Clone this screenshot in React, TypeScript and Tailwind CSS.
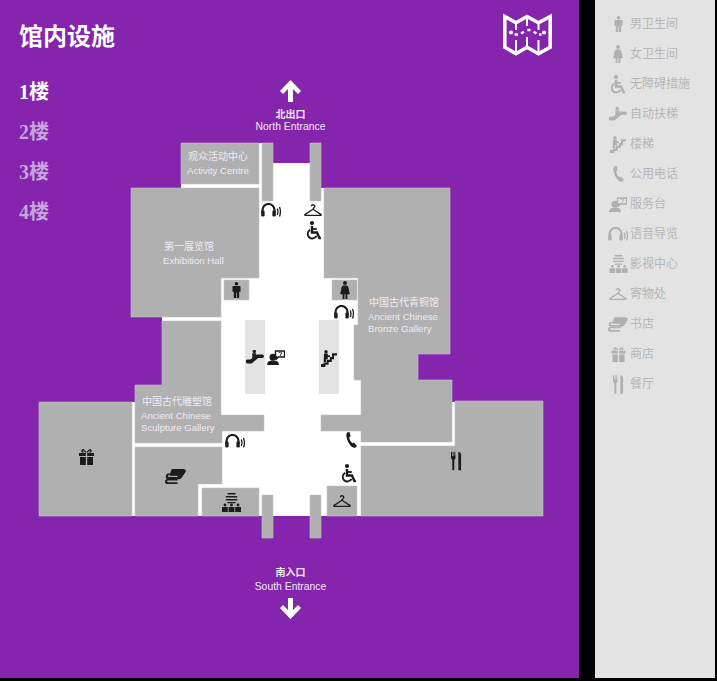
import type { ReactNode } from "react";

type IconProps = { className?: string };

function ManIcon({ className }: IconProps) {
  return (
    <svg viewBox="0 0 10 18" className={className} fill="currentColor">
      <circle cx="5" cy="2" r="2" />
      <path d="M1.500 4.600h7a1 1 0 0 1 1 1V11H8v7H5.400v-6h-.8v6H2v-7H.5V5.600a1 1 0 0 1 1-1z" />
    </svg>
  );
}

function WomanIcon({ className }: IconProps) {
  return (
    <svg viewBox="0 0 10 18" className={className} fill="currentColor">
      <circle cx="5" cy="2" r="2" />
      <path d="M3 4.600h4c1.200.8 1.600 2 1.800 3.400l1 5.200H7.400V18H5.500v-4.800h-1V18H2.600v-4.800H.2l1-5.200C1.400 6.600 1.800 5.400 3 4.600z" />
    </svg>
  );
}

function WheelchairIcon({ className }: IconProps) {
  return (
    <svg viewBox="0 0 14 19" className={className} fill="none" stroke="currentColor">
      <circle cx="5" cy="2.100" r="2.100" fill="currentColor" stroke="none" />
      <path d="M5 5v6.500h5l2.400 5.500h1.500" strokeWidth="2.400" />
      <path d="M5 8h4.800" strokeWidth="1.800" />
      <path d="M3.200 8.800a4.600 4.600 0 1 0 6.300 6" strokeWidth="1.900" />
    </svg>
  );
}

function EscalatorIcon({ className }: IconProps) {
  return (
    <svg viewBox="0 0 18 14" className={className} fill="currentColor">
      <circle cx="8.300" cy="1.500" r="1.700" />
      <path d="M6.300 3.200h3.800v2.900L7.500 8.500H6.300z" />
      <path d="M1.800 9.400h2.700L10.800 4.400h5.400a1.800 1.800 0 0 1 0 3.600h-4L5.600 13.400H1.800a2 2 0 0 1 0-4z" />
    </svg>
  );
}

function StairsIcon({ className }: IconProps) {
  return (
    <svg viewBox="0 0 16 17" className={className} fill="currentColor">
      <circle cx="5" cy="1.700" r="1.700" />
      <path d="M3 3.500H6.800V5.200H9V7H6.800V9.300H5V12H2.800V8z" />
      <path d="M0 14h2.500v-1.500h3.200V9.800h3.200V7H11V3.200H16v2.200h-3v3.800h-2.200V12H7.600v2.700H4.400V17H0z" />
    </svg>
  );
}

function PhoneIcon({ className }: IconProps) {
  return (
    <svg viewBox="0 0 11 16" className={className} fill="currentColor">
      <path d="M1.600.2 3.500 0l1.200 4.200-1.500 1c.2 2.200 1.500 4.800 3.300 6l1.400-.8L11 14l-1.700 1.700C5.200 16.600.6 9 .3 3.200.2 2 .7.800 1.600.2z" />
    </svg>
  );
}

function ServiceIcon({ className }: IconProps) {
  return (
    <svg viewBox="0 0 18 15" className={className} fill="currentColor">
      <circle cx="6" cy="7.300" r="3.500" />
      <path d="M0 15c0-3 2-4 4-4.200h4c2 .2 4 1.200 4 4.200z" />
      <path d="M8.500 1h9v6h-6l-1.800 1.800V7H8.500z" fill="none" stroke="currentColor" strokeWidth="1.400" />
      <path d="M11.800 3c.2-1.400 2.800-1.400 2.800.1 0 1-1.300 1-1.300 2M13.300 5.300v.9" fill="none" stroke="currentColor" strokeWidth="1" />
    </svg>
  );
}

function AudioIcon({ className }: IconProps) {
  return (
    <svg viewBox="0 0 20 14" className={className} fill="none" stroke="currentColor">
      <path d="M1.500 10V7a6 6 0 0 1 12 0v3" strokeWidth="2.200" />
      <rect x=".2" y="7.500" width="3.400" height="6" rx="1.300" fill="currentColor" stroke="none" />
      <rect x="11.400" y="7.500" width="3.400" height="6" rx="1.300" fill="currentColor" stroke="none" />
      <path d="M16.300 5.500c.8 2 .8 4.500 0 6.500M18.500 4c1.200 3 1.200 6.500 0 9.500" strokeWidth="1.300" />
    </svg>
  );
}

function CinemaIcon({ className }: IconProps) {
  return (
    <svg viewBox="0 0 19 19" className={className} fill="currentColor">
      <path d="M5.500 0h8v1.500h-8zM3.800 3h11.400v1.500H3.800zM3.800 6h11.400v1.500H3.800zM5.500 9h8v1.200h-8z" />
      <circle cx="3" cy="12" r="1.400" />
      <circle cx="9.500" cy="12" r="1.400" />
      <circle cx="16" cy="12" r="1.400" />
      <path d="M0 14h5.800v5H0zM6.600 14h5.800v5H6.600zM13.200 14H19v5h-5.800z" />
    </svg>
  );
}

function HangerIcon({ className }: IconProps) {
  return (
    <svg viewBox="0 0 18 12" className={className} fill="none" stroke="currentColor" strokeWidth="1.300">
      <path d="M7.300 2.300C7.500.3 10.800.2 10.800 2.300 10.800 3.800 9 3.700 9 5.200L.9 10.600c-.3.400 0 .8.400.8h15.400c.4 0 .7-.4.400-.8L9 5.200" />
    </svg>
  );
}

function BooksIcon({ className }: IconProps) {
  return (
    <svg viewBox="0 0 21 15" className={className} fill="currentColor">
      <path d="M7 0h11c2.500 0 3.500 1.500 2.500 3L17.500 7.500c-1 1.800-2.600 3-5 3V6.800H5C5 4 5.800 1.500 7 0z" />
      <path d="M2.500 4.500H13v1.800H3.800c-1.200 0-1.200 1.800 0 1.800H13v1.800H2C.2 9.500.5 5.500 2.500 4.500z" />
      <path d="M1.800 10H12.500v1.500H3c-1.100 0-1.100 1.800 0 1.800h9.500V15H1.500C-.5 14.500-.5 10.800 1.800 10z" />
    </svg>
  );
}

function GiftIcon({ className }: IconProps) {
  return (
    <svg viewBox="0 0 15 16" className={className} fill="currentColor">
      <path d="M0 4h6.800v3H0zM8.200 4H15v3H8.200zM1 8h5.800v8H1zM8.200 8H14v8H8.200z" />
      <path d="M7 3.400 4.500.8C3.300.4 2.500 1.800 3.300 2.800l1.200.7M8 3.400 10.500.8c1.200-.4 2 1 1.200 2l-1.200.7" fill="none" stroke="currentColor" strokeWidth="1.300" />
    </svg>
  );
}

function DiningIcon({ className }: IconProps) {
  return (
    <svg viewBox="0 0 12 20" className={className} fill="currentColor">
      <path d="M0 0h1v4.500h.8V0h1v4.500h.8V0h1v1l.4 5.500c0 1-.7 1.800-1.400 2V20H1.400V8.500C.6 8.300 0 7.500 0 6.500z" />
      <path d="M8 0c2 .5 3 1 3 4v16H8z" />
    </svg>
  );
}

function MapLogo() {
  return (
    <svg viewBox="0 0 49 43" className="w-[49px] h-[43px]" fill="none" stroke="white">
      <path d="M1.800 3.500 13 9.800 24 3.500l11.500 6.300 11.700-6.300v30.800L35.500 40.700 24 34.300 13 40.700 1.800 34.300z" strokeWidth="3.600" />
      <path d="M13 9v8M13 27v13M24 3v10M24 24v10M35.500 9v8M35.500 27v13" strokeWidth="2" />
      <circle cx="8" cy="19.500" r="2.100" fill="white" stroke="none" />
      <circle cx="41" cy="19.500" r="2.100" fill="white" stroke="none" />
      <path d="M11.500 21.500h3.500M18 20.500l3-1.800M24.300 17h3.200M30.500 18.800l3 1.700M36 21.500h2.500" strokeWidth="2.400" />
    </svg>
  );
}

const facilities = [
  { label: "男卫生间", icon: <ManIcon className="w-[9px] h-[18px]" /> },
  { label: "女卫生间", icon: <WomanIcon className="w-[10px] h-[18px]" /> },
  { label: "无障碍措施", icon: <WheelchairIcon className="w-[14px] h-[19px]" /> },
  { label: "自动扶梯", icon: <EscalatorIcon className="w-[18px] h-[14px]" /> },
  { label: "楼梯", icon: <StairsIcon className="w-[16px] h-[17px]" /> },
  { label: "公用电话", icon: <PhoneIcon className="w-[11px] h-[16px]" /> },
  { label: "服务台", icon: <ServiceIcon className="w-[18px] h-[15px]" /> },
  { label: "语音导览", icon: <AudioIcon className="w-[20px] h-[14px]" /> },
  { label: "影视中心", icon: <CinemaIcon className="w-[19px] h-[18px]" /> },
  { label: "寄物处", icon: <HangerIcon className="w-[18px] h-[12px]" /> },
  { label: "书店", icon: <BooksIcon className="w-[20px] h-[15px]" /> },
  { label: "商店", icon: <GiftIcon className="w-[15px] h-[15px]" /> },
  { label: "餐厅", icon: <DiningIcon className="w-[11px] h-[19px]" /> },
];

const floors = ["1楼", "2楼", "3楼", "4楼"];

function FloorPlan() {
  return (
    <svg viewBox="0 0 579 678" className="absolute inset-0 w-[579px] h-[678px]">
      <g fill="#fff">
        <path d="M273 163h37v25h14v90h34v47h3v191H198v-32h23V278h38V143h3v45h11z" />
        <rect x="181" y="184" width="80" height="4" />
        <rect x="162" y="317" width="60" height="4" />
        <rect x="135" y="443" width="90" height="4" />
        <rect x="132" y="402" width="3" height="114" />
        <rect x="358" y="442" width="97" height="4" />
        <rect x="452" y="402" width="3" height="44" />
      </g>
      <g fill="#b0b0b0" stroke="#c4c4c4" strokeWidth="0.6">
        <path d="M181 143h78v41h-78z" />
        <path d="M131 188h128v90h-38v39h-90z" />
        <path d="M162 321h59v94h43v16h-42v12h-87v-58h27z" />
        <path d="M135 447h87v37h-24v32h-63z" />
        <path d="M39 402h93v114H39z" />
        <path d="M202 488h57v28h-57z" />
        <path d="M324 188h126v166h-32v26h34v62h-91v-11h-40v-16h40v-35h-7v-55h4v-47h-34z" />
        <path d="M361 446h94v-45h88v115H361z" />
        <path d="M327 486h30v30h-30z" />
        <path d="M224 280h25v20h-25zM332 280h25v20h-25z" />
        <path d="M262 143h11v58h-11zM310 143h11v58h-11zM262 495h11v43h-11zM310 495h11v43h-11z" />
      </g>
      <path d="M245 320h20v74h-20zM319 320h20v74h-20z" fill="#e3e3e3" />
      <path d="M290.500 80 301 91l-3 3-5-5v13h-5V89l-5 5-3-3z" fill="#fff" />
      <path d="M290.500 619 301 608l-3-3-5 5v-12h-5v12l-5-5-3 3z" fill="#fff" />
    </svg>
  );
}

function MapLabel({ className, children }: { className: string; children: ReactNode }) {
  return (
    <div className={`absolute flex flex-col whitespace-nowrap ${className}`}>{children}</div>
  );
}

function MapLabels() {
  const cjk = "mb-[3px] text-[10px] leading-[10px]";
  const en = "text-[9.6px] leading-[12px]";
  return (
    <div className="font-['Liberation_Sans','Noto_Sans_CJK_SC',sans-serif] text-[#f0e9f4]">
      <MapLabel className="left-[250px] top-[110px] w-[81px] items-center">
        <span className="mb-[1px] text-[10px] leading-[10px] font-bold">北出口</span>
        <span className="text-[10.4px] leading-[12px]">North Entrance</span>
      </MapLabel>
      <MapLabel className="left-[187px] top-[152px]">
        <span className={`${cjk} pl-px`}>观众活动中心</span>
        <span className={en}>Activity Centre</span>
      </MapLabel>
      <MapLabel className="left-[163px] top-[242px]">
        <span className={`${cjk} pl-px`}>第一展览馆</span>
        <span className={en}>Exhibition Hall</span>
      </MapLabel>
      <MapLabel className="left-[368px] top-[298px]">
        <span className={`${cjk} pl-px`}>中国古代青铜馆</span>
        <span className={en}>Ancient Chinese</span>
        <span className={en}>Bronze Gallery</span>
      </MapLabel>
      <MapLabel className="left-[141px] top-[397px]">
        <span className={`${cjk} pl-px`}>中国古代雕塑馆</span>
        <span className={en}>Ancient Chinese</span>
        <span className={en}>Sculpture Gallery</span>
      </MapLabel>
      <MapLabel className="left-[250px] top-[568px] w-[81px] items-center">
        <span className="mb-[3px] text-[10px] leading-[10px] font-bold">南入口</span>
        <span className="text-[10.4px] leading-[12px]">South Entrance</span>
      </MapLabel>
    </div>
  );
}

function MapIcons() {
  return (
    <div className="text-[#1c1c1c]">
      <AudioIcon className="absolute left-[261px] top-[203px] w-[20px] h-[14px]" />
      <HangerIcon className="absolute left-[304px] top-[204px] w-[18px] h-[12px]" />
      <WheelchairIcon className="absolute left-[307px] top-[221px] w-[14px] h-[19px]" />
      <ManIcon className="absolute left-[232px] top-[281px] w-[9px] h-[18px]" />
      <WomanIcon className="absolute left-[340px] top-[281px] w-[10px] h-[18px]" />
      <AudioIcon className="absolute left-[334px] top-[305px] w-[20px] h-[14px]" />
      <EscalatorIcon className="absolute left-[246px] top-[350px] w-[18px] h-[14px]" />
      <ServiceIcon className="absolute left-[267px] top-[350px] w-[18px] h-[15px]" />
      <StairsIcon className="absolute left-[321px] top-[350px] w-[16px] h-[17px]" />
      <AudioIcon className="absolute left-[225px] top-[434px] w-[20px] h-[14px]" />
      <PhoneIcon className="absolute left-[346px] top-[432px] w-[11px] h-[16px]" />
      <WheelchairIcon className="absolute left-[342px] top-[464px] w-[14px] h-[19px]" />
      <HangerIcon className="absolute left-[333px] top-[495px] w-[18px] h-[12px]" />
      <DiningIcon className="absolute left-[451px] top-[451px] w-[11px] h-[20px]" />
      <GiftIcon className="absolute left-[79px] top-[449px] w-[15px] h-[16px]" />
      <BooksIcon className="absolute left-[165px] top-[469px] w-[21px] h-[15px]" />
      <CinemaIcon className="absolute left-[222px] top-[493px] w-[19px] h-[19px]" />
    </div>
  );
}

export default function App() {
  return (
    <div className="flex w-[717px] h-[681px] bg-black font-['Liberation_Serif','Noto_Sans_CJK_SC',serif]">
      <main className="relative w-[579px] h-[678px] bg-[#8524ad] overflow-hidden">
        <FloorPlan />
        <MapLabels />
        <MapIcons />
        <header className="relative flex items-start justify-between pl-[19px] pr-[27px] pt-[13px]">
          <h1 className="mt-[9px] text-2xl leading-[30px] font-bold text-white">馆内设施</h1>
          <MapLogo />
        </header>
        <ul className="relative mt-[21px] pl-[19px] flex flex-col gap-[10px]">
          {floors.map((floor, i) => (
            <li
              key={floor}
              className={i === 0 ? "h-[30px] leading-[30px] text-xl font-bold text-white" : "h-[30px] leading-[30px] text-xl font-bold text-[#c9a3dd]"}
            >
              {floor}
            </li>
          ))}
        </ul>
      </main>
      <aside className="ml-4 w-[120px] h-[678px] bg-[#e3e3e3] pt-[9px] pl-[13px] font-['Liberation_Sans','Noto_Sans_CJK_SC',sans-serif]">
        {facilities.map((item) => (
          <div key={item.label} className="flex items-center h-[30px] text-[#b0b0b0]">
            <span className="flex items-center justify-center w-5 mr-[2px]">{item.icon}</span>
            <span className="text-xs text-[#b6b6b6]">{item.label}</span>
          </div>
        ))}
      </aside>
    </div>
  );
}
